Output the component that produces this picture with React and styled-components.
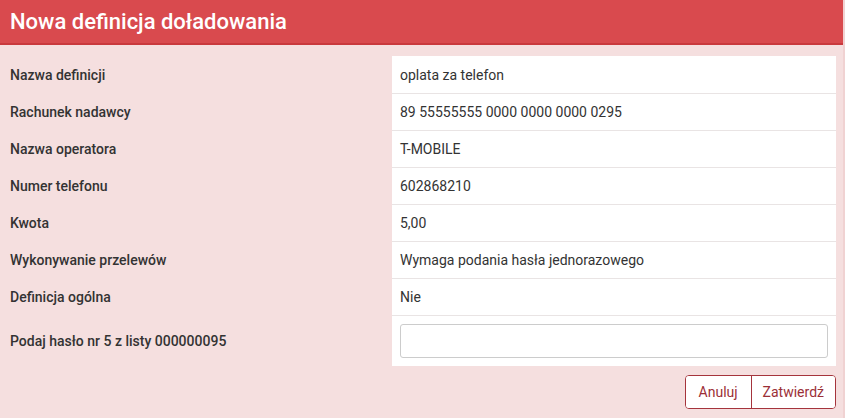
import React from "react";
import styled, { createGlobalStyle } from "styled-components";

const Global = createGlobalStyle`
  html, body { margin: 0; padding: 0; background: #fff; }
  body { font-family: Roboto, "Liberation Sans", Arial, sans-serif; }
  * { box-sizing: border-box; }
`;

const Panel = styled.div`
  width: 845px;
  background: #f5dfdf;
  border-right: 2px solid #f0d2d2;
  min-height: 418px;
`;

const Header = styled.div`
  height: 45px;
  background: #d94a4e;
  border-bottom: 2px solid #c9393d;
  display: flex;
  align-items: center;
  padding: 0 10px;
`;

const Title = styled.h1`
  margin: 0;
  color: #fff;
  font-size: 22px;
  font-weight: 500;
`;

const Body = styled.div`
  padding: 11px 7px 0 0;
`;

const Table = styled.div`
  display: grid;
  grid-template-columns: 392px 1fr;
`;

const Label = styled.div`
  height: ${(p) => (p.$tall ? 51 : 37)}px;
  display: flex;
  align-items: center;
  padding-left: 10px;
  font-size: 14px;
  font-weight: 500;
  color: #333;
`;

const Value = styled.div`
  height: ${(p) => (p.$tall ? 51 : 37)}px;
  background: #fff;
  display: flex;
  align-items: center;
  padding: 0 8px;
  font-size: 14px;
  color: #333;
  border-top: ${(p) => (p.$first ? "none" : "1px solid #e9e4e4")};
`;

const Input = styled.input`
  width: 100%;
  height: 34px;
  border: 1px solid #cccccc;
  border-radius: 3px;
  background: #fff;
  font: inherit;
  padding: 0 10px;
  outline: none;
`;

const Actions = styled.div`
  display: flex;
  justify-content: flex-end;
  padding-top: 9px;
`;

const Group = styled.div`
  display: flex;
  border: 1px solid #a5343c;
  border-radius: 4px;
  overflow: hidden;
  background: #fff;
`;

const Button = styled.button`
  height: 32px;
  padding: 0 ${(p) => p.$px}px;
  background: #fff;
  border: none;
  border-left: ${(p) => (p.$sep ? "1px solid #a5343c" : "none")};
  color: #9b2f37;
  font-family: Roboto, "Liberation Sans", Arial, sans-serif;
  font-size: 14px;
  cursor: pointer;
`;

const rows = [
  ["Nazwa definicji", "oplata za telefon"],
  ["Rachunek nadawcy", "89 55555555 0000 0000 0000 0295"],
  ["Nazwa operatora", "T-MOBILE"],
  ["Numer telefonu", "602868210"],
  ["Kwota", "5,00"],
  ["Wykonywanie przelewów", "Wymaga podania hasła jednorazowego"],
  ["Definicja ogólna", "Nie"],
];

export default function App() {
  return (
    <>
      <Global />
      <Panel>
        <Header>
          <Title>Nowa definicja doładowania</Title>
        </Header>
        <Body>
          <Table>
            {rows.map(([l, v], i) => (
              <React.Fragment key={l}>
                <Label>{l}</Label>
                <Value $first={i === 0}>{v}</Value>
              </React.Fragment>
            ))}
            <Label $tall>Podaj hasło nr 5 z listy 000000095</Label>
            <Value $tall>
              <Input type="password" />
            </Value>
          </Table>
          <Actions>
            <Group>
              <Button $px={13}>Anuluj</Button>
              <Button $px={11} $sep>
                Zatwierdź
              </Button>
            </Group>
          </Actions>
        </Body>
      </Panel>
    </>
  );
}
